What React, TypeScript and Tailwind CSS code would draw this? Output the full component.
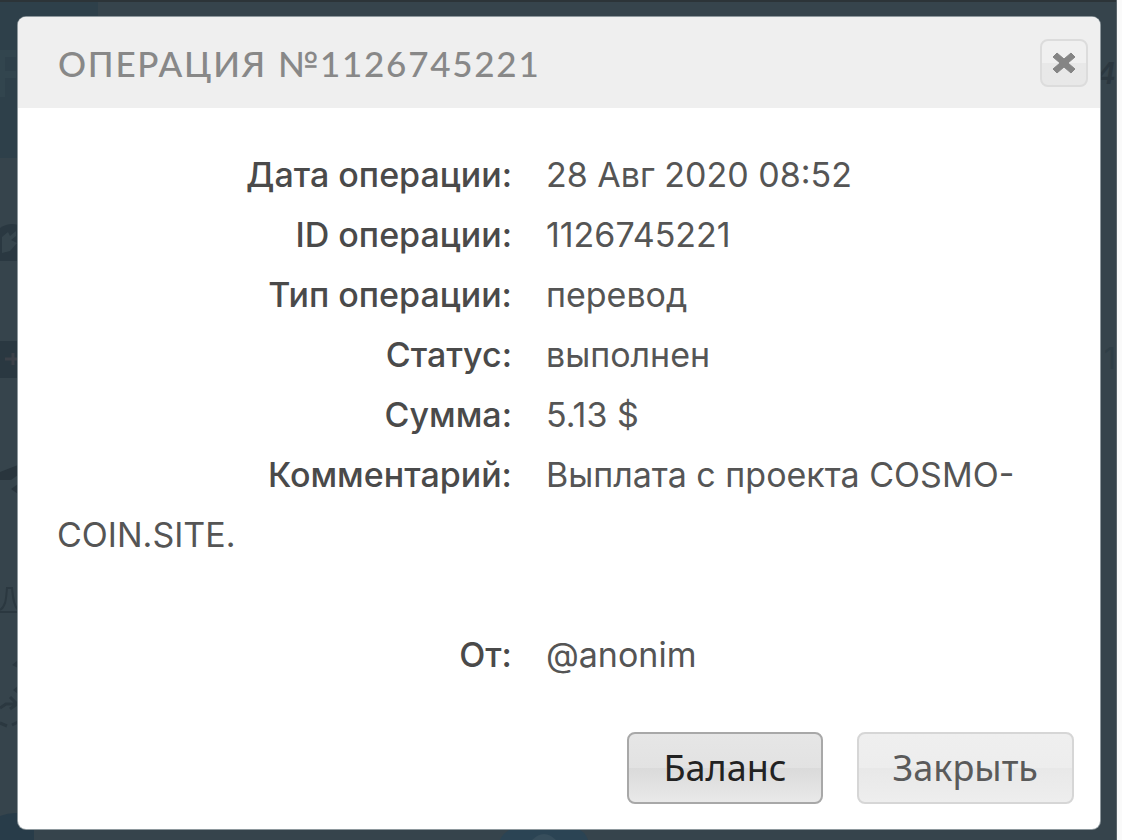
import type { ReactNode } from "react";

type Detail = { label: string; value: ReactNode };

const details: Detail[] = [
  { label: "Дата операции:", value: "28 Авг 2020 08:52" },
  { label: "ID операции:", value: "1126745221" },
  { label: "Тип операции:", value: "перевод" },
  { label: "Статус:", value: "выполнен" },
  { label: "Сумма:", value: "5.13 $" },
  { label: "Комментарий:", value: "Выплата с проекта COSMO-COIN.SITE." },
];

function DetailRow({ label, value }: Detail) {
  return (
    <div>
      <dt className="mr-[34px] inline-block w-[45%] text-right font-medium text-[#4a4a4a]">{label}</dt>
      <dd className="inline">{value}</dd>
    </div>
  );
}

// Dimmed page behind the dialog: sidebar icons on the left, amounts on the right.
function Backdrop() {
  return (
    <div aria-hidden="true" className="absolute inset-0 overflow-hidden border-t-2 border-[#2c3438]">
      <svg className="absolute top-0 left-0" width="98" height="840" viewBox="0 2 98 840">
        <rect width="98" height="158" fill="#2e404a" />
        <path d="M0 50h16v7H5v14h11v7H5v19H0z" fill="#32454e" />
        <path d="M0 228q9-6 18-3v36H0z" fill="#2a3841" />
        <path d="M2 237l6-5 2 4 6-5v5l-5 4 6 3-7 8-8 2z" fill="#36454d" />
        <rect y="341" width="18" height="37" fill="#2a3841" />
        <path d="M5 359h13M13 353v12" stroke="#3c4149" strokeWidth="3" />
        <path d="M0 472l18-7v10l-7 5H0zM11 489l7-5v10z" fill="#29353d" />
        <path d="M0 610c6-4 6-11 7-22h5c1 11 2 18 6 22M0 612h18" fill="none" stroke="#2b3840" strokeWidth="2" />
        <path d="M12 665l6-5v8zM13 690l5-4v8z" fill="#2b3840" />
        <path d="M0 708l6-4h12M10 697l7 7-7 5M0 723l7 3M12 725l6-3" fill="none" stroke="#2b3840" strokeWidth="3" />
        <path d="M0 816q18-7 34 2v24H0z" fill="#283c49" />
      </svg>
      <svg className="absolute bottom-0 left-[500px]" width="90" height="12" viewBox="0 0 90 12">
        <path d="M0 12Q4 3 14 0h62q9 3 12 12z" fill="#2b4454" />
        <path d="M32 12q12-12 24 0" fill="#374e5c" />
      </svg>
      <span className="absolute top-[53px] right-0 text-3xl font-semibold text-[#2b373f] italic">4</span>
      <span className="absolute top-[338px] right-0 text-3xl text-[#2f3e46]">1</span>
    </div>
  );
}

export default function App() {
  return (
    <div className="min-h-screen bg-[#fafafa] pr-[5px] font-['Inter','Liberation_Sans',sans-serif]">
      <div className="relative min-h-screen border-r border-[#59646a] bg-[#36444c] pt-[17px] pr-4 pb-[11px] pl-[18px]">
        <Backdrop />
        <section
          role="dialog"
          aria-labelledby="dialog-title"
          className="relative overflow-hidden rounded-lg bg-white shadow-[0_0_0_1px_#8e989d]"
        >
          <header className="flex items-center justify-between bg-[#efefef] pt-[22px] pr-3 pb-[21px] pl-10">
            <h1
              id="dialog-title"
              className="font-['Lato','Liberation_Sans',sans-serif] text-[35px] leading-[48px] font-medium tracking-wider text-[#888]"
            >
              ОПЕРАЦИЯ №1126745221
            </h1>
            <button
              type="button"
              aria-label="Закрыть окно"
              className="flex size-12 items-center justify-center rounded-lg border-2 border-[#dcdcdc] bg-linear-to-b from-[#f0f0f0] from-50% to-[#e8e8e8] to-50%"
            >
              <svg width="24" height="24" viewBox="0 0 24 24" aria-hidden="true">
                <path
                  d="M5 2L12 8L19 2L23 6L16 12L23 18L19 22L12 16L5 22L1 18L8 12L1 6Z"
                  fill="#858585"
                  stroke="#858585"
                  strokeLinejoin="round"
                />
              </svg>
            </button>
          </header>

          <dl className="pt-[37px] pr-8 pl-[39px] text-[34px] leading-[60px] text-[#555]">
            {details.map((item) => (
              <DetailRow key={item.label} {...item} />
            ))}
            <div className="pt-[60px]">
              <DetailRow label="От:" value="@anonim" />
            </div>
          </dl>

          <footer className="flex justify-end gap-[34px] px-[26px] pt-[47px] pb-[25px] font-['Noto_Sans','Liberation_Sans',sans-serif] text-[36px] leading-[68px]">
            <button
              type="button"
              className="rounded-lg border-2 border-[#a8a8a8] bg-[linear-gradient(#e6e6e6,#e2e2e2_50%,#dadada_50%,#e9e9e9)] px-[34px] text-[#222]"
            >
              Баланс
            </button>
            <button
              type="button"
              className="rounded-lg border-2 border-[#d6d6d6] bg-[linear-gradient(#efefef,#ededed_50%,#e8e8e8_50%,#eeeeee)] px-[34px] text-[#5a5a5a]"
            >
              Закрыть
            </button>
          </footer>
        </section>
      </div>
    </div>
  );
}
